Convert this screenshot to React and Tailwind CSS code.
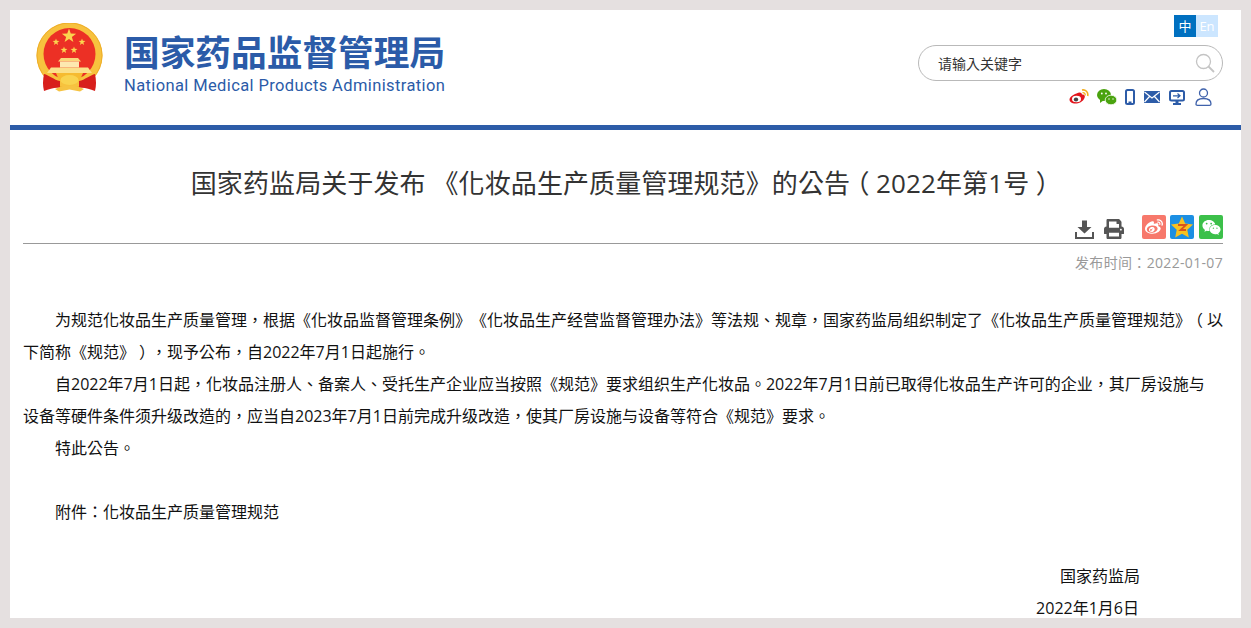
import { FaPrint, FaWeibo, FaWeixin } from "react-icons/fa";

// star path around a centre, outer radius r
function starPath(cx, cy, r) {
  const pts = [];
  for (let i = 0; i < 10; i++) {
    const rad = i % 2 === 0 ? r : r * 0.4;
    const a = -Math.PI / 2 + (i * Math.PI) / 5;
    pts.push(`${(cx + rad * Math.cos(a)).toFixed(2)} ${(cy + rad * Math.sin(a)).toFixed(2)}`);
  }
  return `M${pts.join(" L")} Z`;
}

function Emblem() {
  return (
    <svg width="68" height="72" viewBox="0 0 68 72" className="block">
      <circle cx="33.500" cy="32.500" r="33" fill="#f7c23e" />
      <circle cx="33.500" cy="32.500" r="32.500" fill="none" stroke="#eeae2a" strokeWidth="1" />
      <circle cx="33.500" cy="31" r="26" fill="#ec3025" />
      <path d={starPath(33, 13, 7.500)} fill="#fbd44f" />
      <path d={starPath(20, 19, 3.600)} fill="#fbd44f" />
      <path d={starPath(46, 19, 3.600)} fill="#fbd44f" />
      <path d={starPath(28, 27, 3.600)} fill="#fbd44f" />
      <path d={starPath(38, 27, 3.600)} fill="#fbd44f" />
      <path d="M25 35 H42 L45 38.500 H22 Z" fill="#fbd67a" />
      <rect x="24" y="38.500" width="19" height="6" fill="#fde8b0" />
      <path d="M15 44.500 H52 L56 50 H11 Z" fill="#fbe08a" />
      <path d="M8 51 C13 52 18 57 24 58 L24 65 C19 64 14 66 8 68 Q6 60 8 51 Z" fill="#d81f1c" />
      <path d="M59 51 C54 52 49 57 43 58 L43 65 C48 64 53 66 59 68 Q61 60 59 51 Z" fill="#d81f1c" />
      <path d="M20 50 H47 L44 57 H23 Z" fill="#f6bb30" />
      <ellipse cx="33.500" cy="57" rx="9" ry="5" fill="#f9d34f" />
      <path d="M19 66 Q27 62 33.500 63 Q40 62 48 66 L44 68.500 L33.500 66.500 L23 68.500 Z" fill="#f6c342" />
    </svg>
  );
}

function WeiboColor() {
  return (
    <svg width="20" height="16" viewBox="0 0 20 16" className="block">
      <path d="M7.500 4.500 C10.500 2.800 12.800 3.200 13 5.500 C15.500 5.200 16.500 7 15.500 9 C14 13 9 15 5 14.500 C2 14 0.500 12.500 0.500 10.500 C0.500 8.500 3.500 6 7.500 4.500 Z" fill="#e2141b" />
      <ellipse cx="7.500" cy="10" rx="4.500" ry="3.300" fill="#fff" />
      <ellipse cx="7" cy="10.500" rx="2.200" ry="2" fill="#444" />
      <path d="M13 1 C16.500 0.300 19.500 3 18.700 7" fill="none" stroke="#f3ad1d" strokeWidth="1.600" />
      <path d="M13.500 3.700 C15.300 3.400 16.500 4.700 16.200 6.500" fill="none" stroke="#f3ad1d" strokeWidth="1.300" />
    </svg>
  );
}

function WechatColor() {
  return (
    <svg width="20" height="16" viewBox="0 0 20 16" className="block">
      <ellipse cx="7" cy="6" rx="7" ry="6" fill="#4aa30f" />
      <path d="M3 10 L3 14 L7 11 Z" fill="#4aa30f" />
      <ellipse cx="14" cy="11" rx="5.800" ry="4.800" fill="#4aa30f" stroke="#fff" strokeWidth="0.800" />
      <circle cx="4.800" cy="4.500" r="0.900" fill="#fff" />
      <circle cx="9" cy="4.500" r="0.900" fill="#fff" />
      <circle cx="12" cy="10" r="0.700" fill="#fff" />
      <circle cx="16" cy="10" r="0.700" fill="#fff" />
    </svg>
  );
}

function Phone() {
  return (
    <svg width="10" height="16" viewBox="0 0 10 16" className="block">
      <rect x="1" y="1" width="8" height="14" rx="1.500" fill="none" stroke="#2d5ca8" strokeWidth="2" />
      <rect x="3.500" y="12.500" width="3" height="2" fill="#2d5ca8" />
    </svg>
  );
}

function Mail() {
  return (
    <svg width="16" height="12" viewBox="0 0 16 12" className="block">
      <rect width="16" height="12" rx="0.500" fill="#2d5ca8" />
      <path d="M0.500 1 L8 7 L15.500 1 M0.500 11 L5.500 5.500 M15.500 11 L10.500 5.500" fill="none" stroke="#fff" strokeWidth="1.200" />
    </svg>
  );
}

function Monitor() {
  return (
    <svg width="16" height="15" viewBox="0 0 16 15" className="block">
      <rect x="1" y="1" width="14" height="9.500" rx="1.500" fill="none" stroke="#2d5ca8" strokeWidth="2" />
      <path d="M4 5.800 H11 M8.500 3.500 L11 5.800 L8.500 8" fill="none" stroke="#2d5ca8" strokeWidth="1.200" />
      <rect x="6.500" y="11" width="3" height="2" fill="#2d5ca8" />
      <rect x="4" y="13" width="8" height="2" fill="#2d5ca8" />
    </svg>
  );
}

function User() {
  return (
    <svg width="17" height="18" viewBox="0 0 17 18" className="block">
      <circle cx="8.500" cy="5" r="4" fill="none" stroke="#3f62ab" strokeWidth="1.300" />
      <path d="M1 16 C1 12 4 10.500 8.500 10.500 C13 10.500 16 12 16 16 C16 17 15.500 17.300 14.500 17.300 H2.500 C1.500 17.300 1 17 1 16 Z" fill="none" stroke="#3f62ab" strokeWidth="1.300" />
    </svg>
  );
}

function Download() {
  return (
    <svg width="19" height="19" viewBox="0 0 19 19" className="block">
      <path d="M7 0.500 H12 V7 H16.500 L9.500 13.500 L2.500 7 H7 Z" fill="#555" />
      <path d="M1 12 V18 H18 V12" fill="none" stroke="#555" strokeWidth="2" />
    </svg>
  );
}

function QzoneStar() {
  return (
    <svg width="24" height="24" viewBox="0 0 24 24" className="block">
      <rect width="24" height="24" rx="2" fill="#1c8fe3" />
      <path d="M12 1.500 L15.200 8.500 L23 9.500 L17.300 14.800 L18.800 22.500 L12 18.700 L5.200 22.500 L6.700 14.800 L1 9.500 L8.800 8.500 Z" fill="#f7c11f" />
      <path d="M8 10 H16 L10.500 15 H16" fill="none" stroke="#d8531c" strokeWidth="1.800" />
    </svg>
  );
}

// full-width bracket with its glyph centred in the em box
function Bracket({ children }) {
  return (
    <span className="inline-block w-[1em] text-center indent-0 [font-feature-settings:'halt']">{children}</span>
  );
}

export default function App() {
  return (
    <div
      className="h-[628px] overflow-hidden bg-[#e5e0e0] p-[10px] [text-spacing-trim:space-all]"
      style={{ fontFamily: '"Open Sans", "Noto Sans CJK TC", "Liberation Sans", sans-serif' }}
    >
      <div className="h-[608px] overflow-hidden bg-white">
        <header className="flex h-[115px] justify-between pl-[26px] pr-[18px]">
          <div className="flex pt-[13px]">
            <Emblem />
            <div className="ml-[20px] pt-[5px]">
              <div className="font-['Noto_Sans_CJK_SC'] text-[35.7px] leading-[46px] font-bold whitespace-nowrap text-[#2b5ba8]">
                国家药品监督管理局
              </div>
              <div className="mt-[2px] font-['Roboto'] text-[16.5px] leading-[20px] whitespace-nowrap text-[#2b5ba8] tracking-[0.38px]">
                National Medical Products Administration
              </div>
            </div>
          </div>

          <div className="flex w-[305px] flex-col items-end">
            <div className="mt-[5px] mr-[5px] flex text-[13px] leading-[22px] text-white">
              <span className="w-[22px] bg-[#0070c0] text-center">中</span>
              <span className="w-[22px] bg-[#cce6ff] text-center">En</span>
            </div>
            <div className="mt-[8px] flex h-[36px] w-[305px] items-center justify-between rounded-[18px] border border-[#b9b9b9] pr-[7px] pl-[19px] text-[14px] text-[#333]">
              <span>请输入关键字</span>
              <svg width="20" height="20" viewBox="0 0 20 20" className="block">
                <circle cx="8.500" cy="8.500" r="7" fill="none" stroke="#c4c4c4" strokeWidth="1.300" />
                <path d="M13.500 13.500 L19 19" stroke="#c4c4c4" strokeWidth="1.800" />
              </svg>
            </div>
            <div className="mt-[7px] mr-[11px] flex items-center">
              <WeiboColor />
              <div className="ml-[8px]"><WechatColor /></div>
              <div className="ml-[8px]"><Phone /></div>
              <div className="ml-[9px]"><Mail /></div>
              <div className="ml-[9px]"><Monitor /></div>
              <div className="ml-[10px]"><User /></div>
            </div>
          </div>
        </header>

        <div className="h-[5px] bg-[#2d5ca8]" />

        <main className="pr-[18px] pl-[13px]">
          <h1 className="mt-[35px] text-center text-[26px] leading-[36px] font-normal tracking-[0.1px] whitespace-nowrap text-[#333]">
            国家药监局关于发布 《化妆品生产质量管理规范》的公告<Bracket>（</Bracket>2022年第1号<Bracket>）</Bracket>
          </h1>

          <div className="mt-[12px] flex h-[31px] items-start justify-end border-b border-[#999] pb-[3px]">
            <div className="mt-[4px] flex items-center pt-[2px] text-[#555]">
              <Download />
              <FaPrint size={20} className="ml-[10px]" />
            </div>
            <div className="mt-[2px] ml-[18px] flex h-[24px] w-[24px] items-center justify-center rounded-[2px] bg-[#f7786b] text-white">
              <FaWeibo size={18} />
            </div>
            <div className="mt-[2px] ml-[4px]"><QzoneStar /></div>
            <div className="mt-[2px] ml-[5px] flex h-[24px] w-[24px] items-center justify-center rounded-[2px] bg-[#3cc04a] text-white">
              <FaWeixin size={19} />
            </div>
          </div>

          <div className="mt-[7px] text-right text-[14px] leading-[24px] tracking-[0.33px] text-[#999]">发布时间：2022-01-07</div>

          <div className="mt-[29px] text-[16px] leading-[32px] text-[#111]">
            <p className="-mr-[2px] indent-[32px]">
              为规范化妆品生产质量管理，根据《化妆品监督管理条例》《化妆品生产经营监督管理办法》等法规、规章，国家药监局组织制定了《化妆品生产质量管理规范》<Bracket>（</Bracket>以<br />下简称《规范》<Bracket>）</Bracket>，现予公布，自2022年7月1日起施行。
            </p>
            <p className="pr-[3px] indent-[32px]">
              自2022年7月1日起，化妆品注册人、备案人、受托生产企业应当按照《规范》要求组织生产化妆品。2022年7月1日前已取得化妆品生产许可的企业，其厂房设施与设备等硬件条件须升级改造的，应当自2023年7月1日前完成升级改造，使其厂房设施与设备等符合《规范》要求。
            </p>
            <p className="indent-[32px]">特此公告。</p>
            <p className="h-[32px]" />
            <p className="indent-[32px]">附件：化妆品生产质量管理规范</p>
            <p className="h-[32px]" />
            <p className="pr-[83px] text-right">国家药监局</p>
            <p className="pr-[84px] text-right">2022年1月6日</p>
          </div>
        </main>
      </div>
    </div>
  );
}
